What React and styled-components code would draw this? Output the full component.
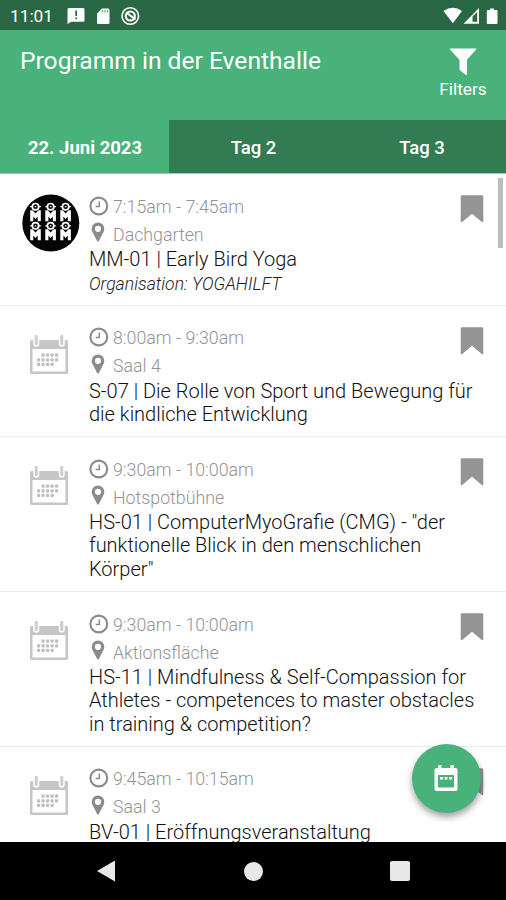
import React from "react";

// Styled Components
import styled, { createGlobalStyle } from "styled-components";

const days = ["22. Juni 2023", "Tag 2", "Tag 3"];

const sessions = [
  {
    time: "7:15am - 7:45am",
    place: "Dachgarten",
    title: ["MM-01 | Early Bird Yoga"],
    organiser: "Organisation: YOGAHILFT",
    logo: true,
  },
  {
    time: "8:00am - 9:30am",
    place: "Saal 4",
    title: [
      "S-07 | Die Rolle von Sport und Bewegung für",
      "die kindliche Entwicklung",
    ],
  },
  {
    time: "9:30am - 10:00am",
    place: "Hotspotbühne",
    title: [
      'HS-01 | ComputerMyoGrafie (CMG) - "der',
      "funktionelle Blick in den menschlichen",
      'Körper"',
    ],
  },
  {
    time: "9:30am - 10:00am",
    place: "Aktionsfläche",
    title: [
      "HS-11 | Mindfulness & Self-Compassion for",
      "Athletes - competences to master obstacles",
      "in training & competition?",
    ],
  },
  {
    time: "9:45am - 10:15am",
    place: "Saal 3",
    title: ["BV-01 | Eröffnungsveranstaltung"],
  },
];

// Icons
const ClockIcon = () => (
  <svg width="20" height="20" viewBox="0 0 20 20" fill="none" stroke="#8b8b8b">
    <circle cx="9.8" cy="10" r="8.4" strokeWidth="2.1" />
    <path d="M10.3 5.5v5H6.7" strokeWidth="1.5" />
  </svg>
);

const PinIcon = () => (
  <svg width="20" height="20" viewBox="0 0 20 20">
    <path
      fill="#8b8b8b"
      fillRule="evenodd"
      d="M9 .5a6.3 6.3 0 0 1 6.3 6.3c0 1.4-.3 2.2-.8 3.2L9.9 19c-.4.8-1.4.8-1.8 0L3.500 10c-.5-1-.8-1.800-.8-3.200A6.300 6.300 0 0 1 9 .5zm0 3.200a3.100 3.100 0 1 0 0 6.200 3.100 3.100 0 0 0 0-6.200z"
    />
  </svg>
);

const BookmarkIcon = () => (
  <svg width="24" height="28" viewBox="0 0 24 28">
    <path
      fill="#949494"
      d="M2 .3h20q1.300 0 1.300 1.300v24.500q0 1.600-1.500.8L12 18.700 2.200 26.900q-1.500.8-1.500-.8V1.600Q.7.300 2 .3z"
    />
  </svg>
);

const dots = [
  [13, 20], [17.5, 20], [22, 20], [26.5, 20],
  [8.5, 24.7], [13, 24.7], [17.5, 24.7], [22, 24.7], [26.5, 24.7],
  [8.5, 29.2], [13, 29.2], [17.5, 29.2], [22, 29.2],
];

const CalendarIcon = () => (
  <svg width="38" height="40" viewBox="0 0 38 40">
    <path fill="#c6c6c6" d="M1.500 5h35q1.500 0 1.500 1.500v31q0 1.500-1.500 1.500h-35Q0 39 0 37.500v-31Q0 5 1.500 5z" />
    <path fill="#fff" d="M2.500 14h33v22.500h-33z" />
    <g fill="#cdcdcd" stroke="#fff" strokeWidth="1.5">
      <rect x="4" y="-1" width="4.5" height="12" rx="2.200" />
      <rect x="29.5" y="-1" width="4.5" height="12" rx="2.200" />
    </g>
    <g fill="#bfbfbf">
      {dots.map(([x, y]) => (
        <rect key={`${x}-${y}`} x={x - 1.5} y={y - 1.5} width="3.200" height="3.200" rx="0.7" />
      ))}
    </g>
  </svg>
);

const figures = [
  [13.5, 12.7], [28.6, 12.7], [43.6, 12.7],
  [13.5, 31.8], [28.6, 31.8], [43.6, 31.8],
];

const ClubLogo = () => (
  <svg width="58" height="58" viewBox="0 0 58 58">
    <circle cx="28.8" cy="29" r="28.500" fill="#050505" />
    {figures.map(([x, y]) => (
      <g key={`${x}-${y}`} transform={`translate(${x} ${y})`}>
        <path fill="#fff" d="M-5.300 3.500h2.300L0 6.800l3-3.300h2.300v11H2.200V9.800L0 12.300l-2.200-2.500v4.700h-3.100z" />
        <circle r="3.200" fill="#050505" stroke="#fff" strokeWidth="1.700" />
        <path stroke="#fff" strokeWidth="1.200" d="M-5.300 0h2M3.300 0h2M-.8 0H.8" />
      </g>
    ))}
  </svg>
);

const FunnelIcon = () => (
  <svg width="28" height="28" viewBox="0 0 28 28">
    <path
      fill="#fff"
      d="M1.200.5h25.600q.8.200.3 1L18 11.700V26q0 1.600-1.400.7l-5.400-4.200q-.7-.5-.7-1.300v-9.500L.9 1.500Q.4.700 1.200.5z"
    />
  </svg>
);

const NoticeIcons = () => (
  <svg width="75" height="22" viewBox="0 0 75 22">
    <path fill="#fff" d="M2 3h14q1.500 0 1.500 1.500v10.700q0 1.500-1.500 1.500H4.200L.5 19V4.500Q.5 3 2 3z" />
    <path fill="#2a6745" d="M8.300 5.500H10V11H8.300zM8.300 12.500H10v1.800H8.300z" />
    <path fill="#fff" d="M35 3.500h6q1.500 0 1.500 1.500v12.500q0 1.500-1.500 1.500h-9.500q-1.500 0-1.500-1.500v-9z" />
    <path stroke="#6f9a82" strokeWidth="1.200" d="M35.500 5v2.500M38 5v2.500M40.500 5v2.500" />
    <g fill="none" stroke="#fff">
      <circle cx="63.300" cy="11" r="8.300" strokeWidth="1.600" />
      <circle cx="63.300" cy="11" r="4.500" strokeWidth="2.200" />
      <path strokeWidth="2" d="M60 8l8.500 6.500" />
    </g>
  </svg>
);

const SignalIcons = () => (
  <svg width="56" height="18" viewBox="0 0 56 18">
    <path fill="#fff" d="M.5 4Q9.700-2.500 19 4l-9.200 12.300z" />
    <path fill="#fff" fillRule="evenodd" d="M20.500 16.700L36 1v15.700zM29.500 9.500v5.300h4.700V5z" />
    <path fill="#fff" d="M47 1.500h4V3h2.500q1 0 1 1v12q0 1-1 1h-8.700q-1 0-1-1V4q0-1 1-1H47z" />
  </svg>
);

const ScheduleIcon = () => (
  <svg width="24" height="27" viewBox="0 0 24 27">
    <path
      fill="#fff"
      fillRule="evenodd"
      d="M4 0h3.500v3h9V0H20v3h1.500q2 0 2 2v19q0 2-2 2h-19q-2 0-2-2V5q0-2 2-2H4zM4 10v12.500h16V10z"
    />
    <path fill="#fff" d="M6 12h3v2.500H6zM10.500 12h3v2.500h-3zM15 12h3v2.500h-3z" />
  </svg>
);

const App = () => {
  return (
    <>
      <GlobalStyle />
      <Screen>
        <StatusBar>
          <span>11:01</span>
          <NoticeIcons />
          <Spacer />
          <SignalIcons />
        </StatusBar>

        <Header>
          <h1>Programm in der Eventhalle</h1>
          <FilterButton>
            <FunnelIcon />
            Filters
          </FilterButton>
        </Header>

        <Tabs>
          {days.map((day, index) => (
            <Tab key={day} $active={index === 0}>
              {day}
            </Tab>
          ))}
        </Tabs>

        <List>
          {sessions.map((session) => (
            <Session key={session.title[0]}>
              <Picture $logo={session.logo}>
                {session.logo ? <ClubLogo /> : <CalendarIcon />}
              </Picture>
              <Details>
                <Meta>
                  <ClockIcon />
                  {session.time}
                </Meta>
                <Meta $place>
                  <PinIcon />
                  {session.place}
                </Meta>
                <Title>
                  {session.title.map((line) => (
                    <span key={line}>{line}</span>
                  ))}
                </Title>
                {session.organiser && (
                  <Organiser>{session.organiser}</Organiser>
                )}
              </Details>
              <Bookmark>
                <BookmarkIcon />
              </Bookmark>
            </Session>
          ))}
          <ScrollThumb />
          <ScheduleButton>
            <ScheduleIcon />
          </ScheduleButton>
        </List>

        <NavBar>
          <svg width="20" height="22" viewBox="0 0 20 22">
            <path fill="#e8e8e8" d="M19 .5v21L1 11z" />
          </svg>
          <Home />
          <Recent />
        </NavBar>
      </Screen>
    </>
  );
};

export default App;

const GlobalStyle = createGlobalStyle`
  * {
    box-sizing: border-box;
  }

  body {
    margin: 0;
    font-family: Roboto, sans-serif;
    overflow: hidden;
  }

  svg {
    display: block;
    flex-shrink: 0;
  }

  button {
    border: 0;
    padding: 0;
    background: none;
    font-family: inherit;
  }
`;

const Screen = styled.div`
  width: 506px;
  height: 900px;
  display: flex;
  flex-direction: column;
  background: #fff;
`;

const StatusBar = styled.div`
  height: 30px;
  flex-shrink: 0;
  display: flex;
  align-items: center;
  padding: 1px 7px 0 10px;
  background: #2a6745;
  color: #fff;

  span {
    width: 57px;
    font-size: 17.3px;
  }
`;

const Spacer = styled.div`
  flex: 1;
`;

const Header = styled.header`
  height: 90px;
  flex-shrink: 0;
  display: flex;
  justify-content: space-between;
  align-items: flex-start;
  padding: 15px 17px 0 20px;
  background: #49b27b;
  color: #fff;

  h1 {
    margin: 0;
    padding-top: 1px;
    font-size: 24.6px;
    line-height: 30px;
    font-weight: 400;
  }
`;

const FilterButton = styled.button`
  width: 52px;
  display: flex;
  flex-direction: column;
  align-items: center;
  gap: 2px;
  padding-top: 3px;
  color: #fff;
  font-size: 17.3px;
  line-height: 22px;
`;

const Tabs = styled.div`
  height: 54px;
  flex-shrink: 0;
  display: grid;
  grid-template-columns: 169px 168px 169px;
  border-bottom: 1px solid #a9c4b5;
`;

const Tab = styled.button`
  background: ${({ $active }) => ($active ? "#49b27b" : "#327c54")};
  color: #fff;
  font-size: 18.5px;
  font-weight: ${({ $active }) => ($active ? 700 : 500)};
  padding: 2px 0 0 1px;
`;

const List = styled.main`
  position: relative;
  flex: 1;
  min-height: 0;
  overflow: hidden;
`;

const Session = styled.article`
  display: flex;
  align-items: flex-start;
  padding: 18px 22px 10px 0;
  border-bottom: 1px solid #ebebeb;
`;

const Picture = styled.div`
  width: 89px;
  flex-shrink: 0;
  padding: ${({ $logo }) => ($logo ? "2px 0 0 22px" : "11px 0 0 30px")};
`;

const Details = styled.div`
  flex: 1;
  min-width: 0;
`;

const Meta = styled.div`
  height: 28px;
  display: flex;
  align-items: center;
  gap: 4px;
  color: #939393;
  font-size: 17.8px;
  font-weight: 300;
  white-space: nowrap;

  svg {
    margin-top: ${({ $place }) => ($place ? "-4px" : "-1px")};
  }
`;

const Title = styled.h2`
  margin: 0;
  color: #111;
  font-size: 20px;
  line-height: 23.3px;
  font-weight: 300;

  span {
    display: block;
    white-space: nowrap;
  }
`;

const Organiser = styled.div`
  color: #222;
  font-size: 17.6px;
  line-height: 23.3px;
  font-weight: 300;
  font-style: italic;
  padding-top: 2px;
  margin-bottom: -2px;
`;

const Bookmark = styled.div`
  width: 24px;
  flex-shrink: 0;
  padding-top: 3px;
`;

const ScrollThumb = styled.div`
  position: absolute;
  top: 4px;
  right: 3px;
  width: 5px;
  height: 70px;
  background: #bdbdbd;
`;

// Floats over the list
const ScheduleButton = styled.button`
  position: absolute;
  right: 25px;
  bottom: 29px;
  width: 69px;
  height: 69px;
  border-radius: 50%;
  background: #49b27b;
  box-shadow: 0 4px 7px rgba(0, 0, 0, 0.38);
  display: flex;
  justify-content: center;
  align-items: center;
  padding-right: 1px;
`;

const NavBar = styled.nav`
  height: 58px;
  flex-shrink: 0;
  display: flex;
  justify-content: space-between;
  align-items: center;
  padding: 0 96px;
  background: #000;
`;

const Home = styled.div`
  width: 19px;
  height: 19px;
  border-radius: 50%;
  background: #e8e8e8;
`;

const Recent = styled.div`
  width: 20px;
  height: 20px;
  border-radius: 2px;
  background: #e8e8e8;
`;
